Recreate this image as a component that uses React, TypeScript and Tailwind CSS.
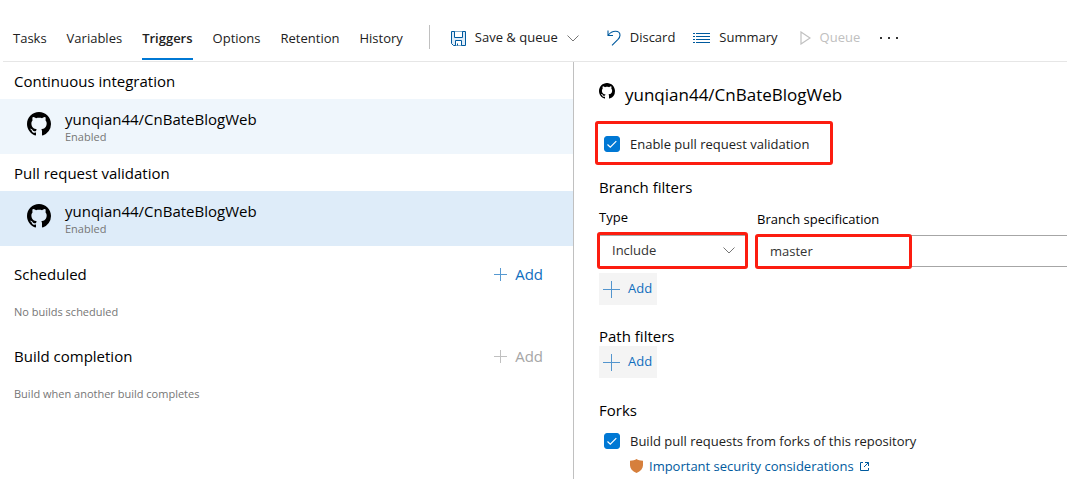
import { useState } from 'react';
import type { ReactNode } from 'react';
import { clsx } from 'clsx';

const REPO = 'yunqian44/CnBateBlogWeb';
const TABS = ['Tasks', 'Variables', 'Triggers', 'Options', 'Retention', 'History'];

function GitHubIcon({ className }: { className: string }) {
  return (
    <svg viewBox="0 0 16 16" className={className} fill="black" aria-hidden="true">
      <path d="M8 0C3.58 0 0 3.58 0 8c0 3.54 2.29 6.53 5.47 7.59.4.07.55-.17.55-.38 0-.19-.01-.82-.01-1.49-2.01.37-2.53-.49-2.69-.94-.09-.23-.48-.94-.82-1.13-.28-.15-.68-.52-.01-.53.63-.01 1.08.58 1.23.82.72 1.21 1.87.87 2.33.66.07-.52.28-.87.51-1.07-1.78-.2-3.64-.89-3.64-3.95 0-.87.31-1.59.82-2.15-.08-.2-.36-1.02.08-2.12 0 0 .67-.21 2.2.82.64-.18 1.32-.27 2-.27s1.36.09 2 .27c1.53-1.04 2.2-.82 2.2-.82.44 1.1.16 1.92.08 2.12.51.56.82 1.27.82 2.15 0 3.07-1.87 3.75-3.65 3.95.29.25.54.73.54 1.48 0 1.07-.01 1.93-.01 2.2 0 .21.15.46.55.38A8.01 8.01 0 0 0 16 8c0-4.42-3.58-8-8-8z" />
    </svg>
  );
}

function SaveIcon() {
  return (
    <svg viewBox="0 0 15 15" className="h-[15px] w-[15px]" fill="none" stroke="#005a9e" aria-hidden="true">
      <path d="M.5.5h14v14h-12l-2-2z" fill="#deecf9" />
      <path d="M3.5.5v6h8v-6" fill="white" />
      <path d="M4.5 14.5v-5h6v5M6.5 14.5v-2" fill="white" />
    </svg>
  );
}

function DiscardIcon() {
  return (
    <svg viewBox="0 0 14 16" className="h-4 w-[14px]" fill="none" stroke="#005a9e" strokeWidth="1.1" aria-hidden="true">
      <path d="M1 .5v5h5M1.2 5.2C3.5 2 6 1.2 8.500 1.200c3 0 4.500 1.900 4.500 4 0 1.800-.8 2.900-2 4.200L5 15.300" />
    </svg>
  );
}

function SummaryIcon() {
  return (
    <svg viewBox="0 0 17 12" className="h-3 w-[17px]" stroke="#005a9e" shapeRendering="crispEdges" aria-hidden="true">
      <path d="M0 1.500h2M0 4.500h2M0 7.500h2M0 10.500h2M3 1.500h14M3 4.500h14M3 7.500h14M3 10.500h14" />
    </svg>
  );
}

function PlayIcon() {
  return (
    <svg viewBox="0 0 11 14" className="h-[14px] w-[11px]" fill="none" stroke="#c0c0c0" strokeWidth="1.2" aria-hidden="true">
      <path d="M1 1v12l9-6z" />
    </svg>
  );
}

function ChevronIcon({ className }: { className?: string }) {
  return (
    <svg viewBox="0 0 12 7" className={clsx('h-[7px] w-3', className)} fill="none" stroke="currentColor" aria-hidden="true">
      <path d="M.5.5 6 6 11.500.5" />
    </svg>
  );
}

function PlusIcon({ className }: { className: string }) {
  return (
    <svg className={className} stroke="currentColor" aria-hidden="true">
      <line x1="50%" x2="50%" y1="0" y2="100%" />
      <line x1="0" x2="100%" y1="50%" y2="50%" />
    </svg>
  );
}

// Red frame drawn over a control to point it out
function Highlight({ className }: { className: string }) {
  return <span className={clsx('pointer-events-none absolute rounded-[3px] border-3 border-[#fc1d10]', className)} />;
}

function Checkbox({ id, label }: { id: string; label: string }) {
  const [checked, setChecked] = useState(true);

  return (
    <div className="flex items-center gap-[10px] pl-[5px]">
      <span className="relative flex h-4 w-4">
        <input
          id={id}
          type="checkbox"
          checked={checked}
          onChange={(e) => setChecked(e.target.checked)}
          className="h-4 w-4 appearance-none rounded-[3px] border border-[#0078d4] checked:bg-[#0078d4]"
        />
        <svg viewBox="0 0 16 16" className="pointer-events-none absolute inset-0" fill="none" stroke="white" strokeWidth="1.2" aria-hidden="true">
          <path d="m3.500 8.500 2.800 2.700 6-6" />
        </svg>
      </span>
      <label htmlFor={id} className="text-[13px] leading-5 text-[#212121]">{label}</label>
    </div>
  );
}

function RepoRow({ selected }: { selected?: boolean }) {
  return (
    <button
      className={clsx(
        'flex h-[55px] w-full items-start gap-[14px] pt-[10px] pl-[27px] text-left',
        selected ? 'bg-[#deecf9]' : 'bg-[#eff6fc]'
      )}
    >
      <GitHubIcon className="mt-[3px] h-6 w-6" />
      <span>
        <span className="block text-[15px] leading-5">{REPO}</span>
        <span className="block text-[11px] leading-4 text-[#767676]">Enabled</span>
      </span>
    </button>
  );
}

function EmptySection({ title, note, disabled }: { title: string; note: string; disabled?: boolean }) {
  return (
    <section className="pt-[18px] pr-[30px] pb-2 pl-[14px]">
      <div className="flex items-center justify-between">
        <h2 className="text-[15px] leading-5">{title}</h2>
        <button
          disabled={disabled}
          className={clsx('flex items-center gap-2 text-[15px] leading-5', disabled ? 'text-[#a6a6a6]' : 'text-[#106ebe]')}
        >
          <PlusIcon className="h-[13px] w-[13px] opacity-70" />
          Add
        </button>
      </div>
      <p className="mt-5 text-[11px] leading-4 text-[#767676]">{note}</p>
    </section>
  );
}

function AddFilterButton() {
  return (
    <button className="flex h-8 items-center gap-2 bg-[#f4f4f4] pr-[5px] pl-1 text-[13px] text-[#106ebe]">
      <PlusIcon className="h-[17px] w-[17px] opacity-70" />
      Add
    </button>
  );
}

function Command({ icon, children, disabled }: { icon: ReactNode; children: ReactNode; disabled?: boolean }) {
  return (
    <button disabled={disabled} className={clsx('flex items-center gap-[9px]', disabled && 'text-[#c0c0c0]')}>
      {icon}
      {children}
    </button>
  );
}

export default function App() {
  const [tab, setTab] = useState('Triggers');
  const [branch, setBranch] = useState('master');

  return (
    <div className="flex min-h-screen flex-col overflow-x-hidden bg-white font-['Open_Sans','Noto_Sans',sans-serif] text-black">
      {/* Tabs and commands */}
      <header className="ml-[3px] flex h-[62px] items-end border-b border-[#e6e6e6] pl-[10px] text-[13px] whitespace-nowrap text-[#212121]">
        <nav className="flex gap-5">
          {TABS.map((name) => (
            <button
              key={name}
              onClick={() => setTab(name)}
              className={clsx(
                'mb-px h-9 border-b-2 pb-[6px] leading-5',
                tab === name ? 'border-[#0078d4] font-semibold' : 'border-transparent'
              )}
            >
              {name}
            </button>
          ))}
        </nav>
        <div className="mb-3 ml-[26px] flex h-6 items-center border-l border-[#c0c0c0] pt-[2px] pl-[21px]">
          <Command icon={<SaveIcon />}>
            Save &amp; queue
            <ChevronIcon className="text-[#767676]" />
          </Command>
          <div className="ml-7 flex items-center gap-[18px]">
            <Command icon={<DiscardIcon />}>Discard</Command>
            <Command icon={<SummaryIcon />}>Summary</Command>
          </div>
          <div className="ml-[22px] flex items-center gap-5">
            <Command icon={<PlayIcon />} disabled>Queue</Command>
            <button aria-label="More">
              <svg viewBox="0 0 18 2" className="h-[2px] w-[18px]" fill="#333333" aria-hidden="true">
                <path d="M0 0h2v2H0zM8 0h2v2H8zM16 0h2v2h-2z" />
              </svg>
            </button>
          </div>
        </div>
      </header>

      <main className="grid flex-1 grid-cols-[minmax(0,574fr)_minmax(0,493fr)]">
        {/* Trigger list */}
        <div className="border-r border-[#c0c0c0]">
          <h2 className="px-[14px] pt-[9px] pb-2 text-[15px] leading-5">Continuous integration</h2>
          <RepoRow />
          <h2 className="px-[14px] pt-[9px] pb-2 text-[15px] leading-5">Pull request validation</h2>
          <RepoRow selected />
          <EmptySection title="Scheduled" note="No builds scheduled" />
          <EmptySection title="Build completion" note="Build when another build completes" disabled />
        </div>

        {/* Trigger details */}
        <div className="pt-[21px] pl-[25px]">
          <h1 className="flex items-start gap-[10px] text-[17px] leading-6">
            <GitHubIcon className="h-4 w-4" />
            {REPO}
          </h1>

          <div className="relative mt-[27px] w-fit">
            <Checkbox id="enable-validation" label="Enable pull request validation" />
            <Highlight className="-top-[13px] -right-6 -bottom-[11px] -left-1" />
          </div>

          <h2 className="mt-[23px] text-[15px] leading-5">Branch filters</h2>
          <div className="mt-[10px] flex gap-[10px] text-[13px]">
            <div className="w-[148px]">
              <label htmlFor="filter-type" className="block leading-5">Type</label>
              <div className="relative mt-2">
                <select
                  id="filter-type"
                  className="block h-8 w-full appearance-none border border-[#a6a6a6] bg-white px-3 text-[#333333]"
                >
                  <option>Include</option>
                  <option>Exclude</option>
                </select>
                <ChevronIcon className="pointer-events-none absolute top-3 right-3 text-[#767676]" />
                <Highlight className="-top-[3px] -right-px -bottom-[2px] -left-[2px]" />
              </div>
            </div>
            <div className="min-w-0 flex-1 pt-[2px]">
              <label htmlFor="branch-spec" className="block leading-5">Branch specification</label>
              <div className="relative mt-[6px]">
                <input
                  id="branch-spec"
                  type="text"
                  value={branch}
                  onChange={(e) => setBranch(e.target.value)}
                  className="block h-8 w-full border border-r-0 border-[#a6a6a6] px-3 text-[#333333]"
                />
                <Highlight className="-top-px -bottom-[2px] -left-[2px] w-[157px]" />
              </div>
            </div>
          </div>
          <div className="mt-[6px]">
            <AddFilterButton />
          </div>

          <h2 className="mt-[21px] text-[15px] leading-5">Path filters</h2>
          <AddFilterButton />

          <h2 className="mt-[22px] mb-[11px] text-[15px] leading-5">Forks</h2>
          <Checkbox id="build-forks" label="Build pull requests from forks of this repository" />
          <a href="#security" className="mt-[5px] ml-[31px] flex w-fit items-center gap-[6px] text-[13px] leading-5 text-[#005a9e]">
            <svg viewBox="0 0 13 14" className="h-[14px] w-[13px]" fill="#d67f3c" aria-hidden="true">
              <path d="M6.500 0C8 1.100 10 1.700 13 1.700v4.600c0 3.300-2.300 6-6.500 7.700C2.300 12.300 0 9.600 0 6.300V1.700C3 1.700 5 1.100 6.500 0z" />
            </svg>
            Important security considerations
            <svg viewBox="0 0 9 9" className="h-[9px] w-[9px]" fill="none" stroke="currentColor" aria-hidden="true">
              <path d="M3 .5H.5v8h8V6M5 .5h3.500V4M8.500.5l-4.500 4.500" />
            </svg>
          </a>
        </div>
      </main>
    </div>
  );
}
